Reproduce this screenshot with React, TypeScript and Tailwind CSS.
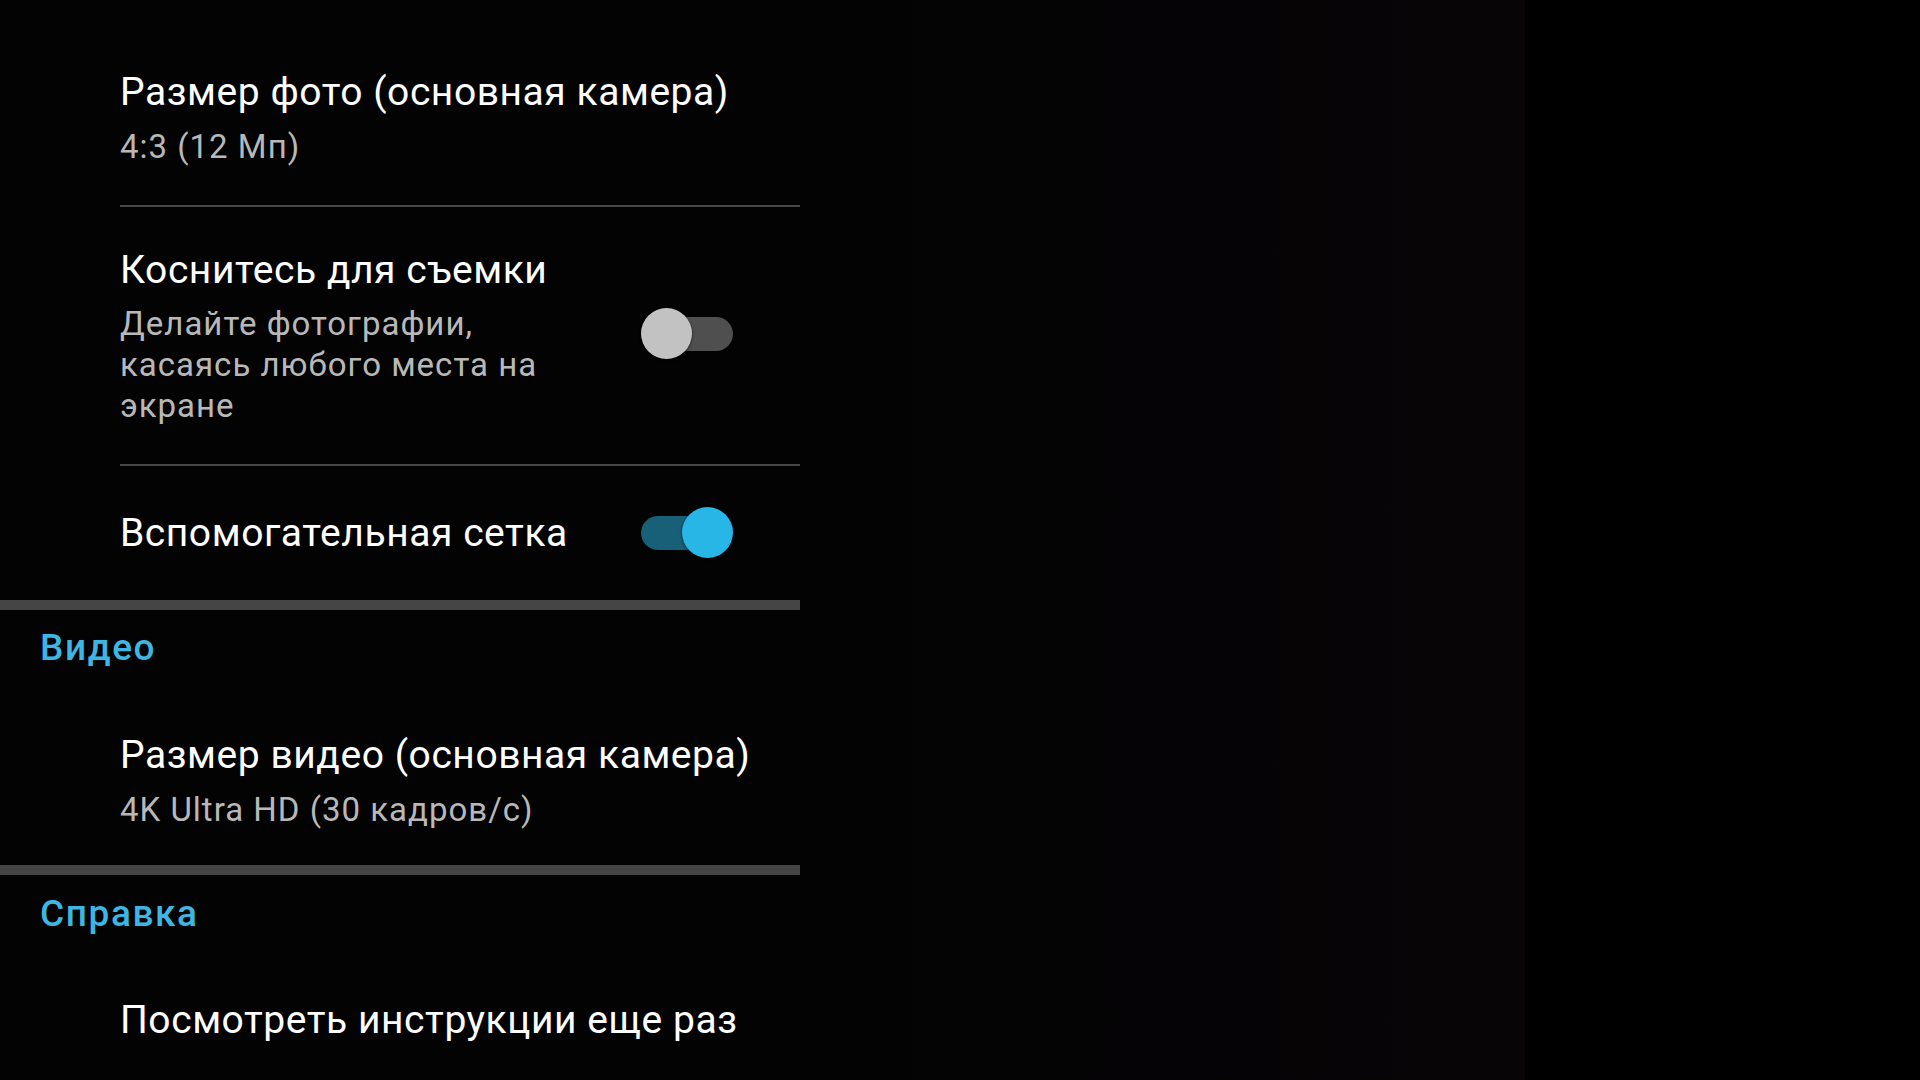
import React from "react";

function Toggle({ on, className = "" }: { on: boolean; className?: string }) {
  if (on) {
    return (
      <div className={"relative w-[92px] h-[52px] shrink-0 " + className}>
        <div className="absolute left-0 top-[9px] w-[80px] h-[34px] rounded-full bg-[#185f78]" />
        <div className="absolute right-0 top-0 w-[51px] h-[51px] rounded-full bg-[#27b6e6] shadow-[0_1px_3px_rgba(0,0,0,0.6)]" />
      </div>
    );
  }
  return (
    <div className={"relative w-[92px] h-[52px] shrink-0 " + className}>
      <div className="absolute right-0 top-[9px] w-[80px] h-[34px] rounded-full bg-[#4f4f4f]" />
      <div className="absolute left-0 top-0 w-[51px] h-[51px] rounded-full bg-[#c2c2c2] shadow-[0_1px_3px_rgba(0,0,0,0.6)]" />
    </div>
  );
}

const titleCls = "text-[39px] leading-[46px] tracking-[0.55px] text-white";
const subCls = "text-[33px] leading-[40px] tracking-[1px] text-[#b8b8b8]";
const headCls = "pl-[40px] text-[37px] leading-[44px] tracking-[1.6px] font-medium text-[#3db6e2]";

export default function App() {
  const font = { fontFamily: "Roboto, 'Noto Sans', sans-serif" };
  return (
    <div className="flex w-full h-[1080px] bg-black overflow-hidden" style={font}>
      <div className="w-[800px] shrink-0 h-full bg-[#030303] flex flex-col">
        {/* Item 1 */}
        <div className="pl-[120px] pt-[69px] pb-[38px]">
          <div className={titleCls}>Размер фото (основная камера)</div>
          <div className={"mt-[12px] " + subCls}>4:3 (12 Мп)</div>
        </div>
        <div className="ml-[120px] h-[2px] bg-[#474747]" />
        {/* Item 2 */}
        <div className="pl-[120px] pr-[67px] pt-[40px] pb-[38px] flex items-center justify-between">
          <div className="w-[450px]">
            <div className={titleCls}>Коснитесь для съемки</div>
            <div className="mt-[10px] text-[33px] leading-[41px] tracking-[1px] text-[#b8b8b8]">
              Делайте фотографии, касаясь любого места на экране
            </div>
          </div>
          <Toggle on={false} className="mb-[5px]" />
        </div>
        <div className="ml-[120px] h-[2px] bg-[#474747]" />
        {/* Item 3 */}
        <div className="pl-[120px] pr-[67px] h-[134px] flex items-center justify-between">
          <div className={titleCls}>Вспомогательная сетка</div>
          <Toggle on={true} />
        </div>
        <div className="h-[10px] bg-[#454545]" />
        {/* Video header */}
        <div className={"pt-[16px] " + headCls}>Видео</div>
        {/* Item 4 */}
        <div className="pl-[120px] pt-[62px] pb-[35px]">
          <div className={titleCls}>Размер видео (основная камера)</div>
          <div className={"mt-[12px] " + subCls}>4K Ultra HD (30 кадров/с)</div>
        </div>
        <div className="h-[10px] bg-[#454545]" />
        {/* Help header */}
        <div className={"pt-[17px] " + headCls}>Справка</div>
        {/* Item 5 */}
        <div className="pl-[120px] pt-[61px]">
          <div className={titleCls}>Посмотреть инструкции еще раз</div>
        </div>
      </div>
      <div className="w-[725px] shrink-0 h-full bg-linear-to-r from-[#040304] via-[#050305] to-[#080507]" />
      <div className="flex-1 h-full bg-black" />
    </div>
  );
}
